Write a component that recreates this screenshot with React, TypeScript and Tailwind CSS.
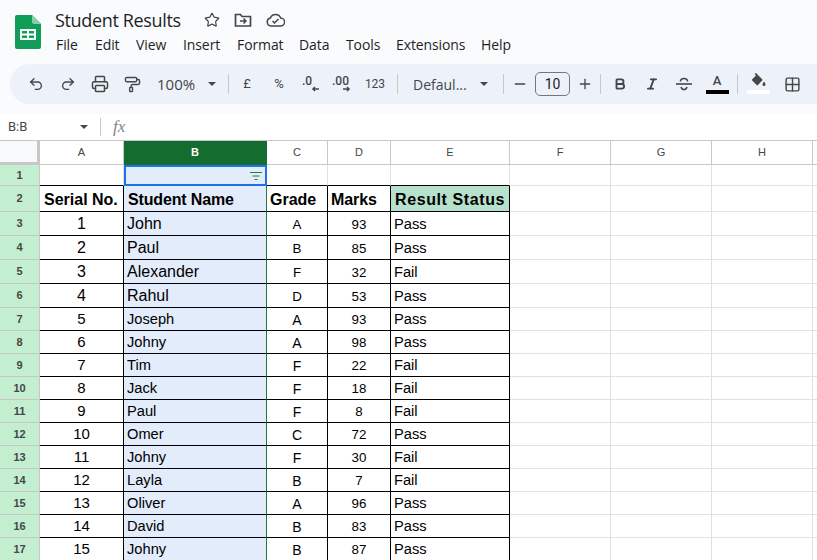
import React from "react";
import { Undo2, Redo2, Printer, PaintRoller, Star, Minus, Plus, Bold, Italic, Grid2x2 } from "lucide-react";

const Caret = ({ className = "" }: { className?: string }) => (
  <svg width="8" height="4" viewBox="0 0 8 4" className={className}><path d="M0 0h8L4 4z" fill="#444746" /></svg>
);
const Sep = () => <div className="h-5 w-px bg-[#c7c7c7] shrink-0" />;
const Btn = ({ children, className = "w-8" }: { children: React.ReactNode; className?: string }) => (
  <div className={`h-6 flex items-center justify-center shrink-0 text-[#444746] ${className}`}>{children}</div>
);

const rows: [string, string, string, string, string, string][] = [
  ["3", "1", "John", "A", "93", "Pass"],
  ["4", "2", "Paul", "B", "85", "Pass"],
  ["5", "3", "Alexander", "F", "32", "Fail"],
  ["6", "4", "Rahul", "D", "53", "Pass"],
  ["7", "5", "Joseph", "A", "93", "Pass"],
  ["8", "6", "Johny", "A", "98", "Pass"],
  ["9", "7", "Tim", "F", "22", "Fail"],
  ["10", "8", "Jack", "F", "18", "Fail"],
  ["11", "9", "Paul", "F", "8", "Fail"],
  ["12", "10", "Omer", "C", "72", "Pass"],
  ["13", "11", "Johny", "F", "30", "Fail"],
  ["14", "12", "Layla", "B", "7", "Fail"],
  ["15", "13", "Oliver", "A", "96", "Pass"],
  ["16", "14", "David", "B", "83", "Pass"],
  ["17", "15", "Johny", "B", "87", "Pass"],
];

const Cell = ({ className = "", children }: { className?: string; children?: React.ReactNode }) => (
  <div className={`flex items-center overflow-hidden whitespace-nowrap border-r border-b text-black ${className}`}>{children}</div>
);
const ColHead = ({ children, active }: { children?: React.ReactNode; active?: boolean }) => (
  <div className={`flex items-center justify-center border-r border-b text-[11px] ${active ? "bg-[#146c2e] border-[#146c2e] text-white font-bold" : "bg-white border-[#c7c7c7] text-[#444746]"}`}>{children}</div>
);
const RowHead = ({ children }: { children: React.ReactNode }) => (
  <div className="flex items-center justify-center bg-[#c4eed0] border-r border-b border-[#c7c7c7] text-[11px] font-bold text-[#444746]">{children}</div>
);

export default function App() {
  return (
    <div className="w-[817px] h-[560px] overflow-hidden bg-white font-['Roboto',sans-serif]">
      <div className="h-[113px] bg-[#f9fbfd] flex flex-col">
        <div className="h-16 flex shrink-0">
          <svg width="26" height="34" viewBox="0 0 26 34" className="ml-[15px] mt-[15px] shrink-0">
            <path d="M2 0h15l9 9v23a2 2 0 0 1-2 2H2a2 2 0 0 1-2-2V2a2 2 0 0 1 2-2z" fill="#0f9d58" />
            <path d="M17 0l9 9h-7a2 2 0 0 1-2-2z" fill="#87ceac" />
            <path d="M5 14h16v11H5zm2 2v2.500h5V16zm7 0v2.500h5V16zM7 20.500V23h5v-2.500zm7 0V23h5v-2.500z" fill="#fff" fillRule="evenodd" />
          </svg>
          <div className="ml-[14px] flex flex-col">
            <div className="flex items-center h-[24px] mt-[8px]">
              <span className="text-[18px] leading-6 text-[#1f1f1f] font-['Open_Sans',sans-serif] tracking-[-0.35px] w-[149px]">Student Results</span>
              <Star size={16} strokeWidth={1.800} className="text-[#444746]" />
              <svg width="18" height="16" viewBox="0 0 18 16" className="ml-[14px]" fill="none" stroke="#444746" strokeWidth="1.700"><path d="M1.500 2.500h5l1.500 2h8.500v9.500h-15z" /><path d="M6 9h6M9.500 6.500L12 9l-2.500 2.500" strokeWidth="1.500" /></svg>
              <svg width="19" height="14" viewBox="0 0 19 14" className="ml-[14px]" fill="none" stroke="#444746" strokeWidth="1.500"><path d="M5 13a4 4 0 0 1-.6-7.900A5.500 5.500 0 0 1 14.700 5 4 4 0 0 1 14.500 13z" /><path d="M6.500 8l2 2 4-4" /></svg>
            </div>
            <div className="flex items-center text-[14px] leading-5 text-[#1f1f1f] mt-[3px] ml-[1px] font-['Open_Sans',sans-serif] gap-[13px] tracking-[-0.1px]">
              <span className="w-[26px]">File</span><span className="w-[28px]">Edit</span><span className="w-[34px]">View</span><span className="w-[41px]">Insert</span><span className="w-[49px]">Format</span><span className="w-[34px]">Data</span><span className="w-[37px]">Tools</span><span className="w-[72px]">Extensions</span><span>Help</span>
            </div>
          </div>
        </div>
        <div className="h-10 ml-[10px] rounded-l-[20px] bg-[#edf2fa] flex items-center pl-[10px] shrink-0">
          <Btn><Undo2 size={16} strokeWidth={2} /></Btn>
          <Btn><Redo2 size={16} strokeWidth={2} /></Btn>
          <Btn><Printer size={18} strokeWidth={2} /></Btn>
          <Btn><PaintRoller size={17} strokeWidth={2} /></Btn>
          <div className="w-[80px] flex items-center pl-[9px] text-[15px] text-[#444746] shrink-0 font-['Open_Sans',sans-serif]"><span>100%</span><Caret className="ml-[13px]" /></div>
          <Sep />
          <div className="w-[2px]" />
          <div className="flex items-center text-[#444746] text-[13px]">
            <Btn><span>£</span></Btn>
            <Btn><span>%</span></Btn>
            <Btn>
              <svg width="20" height="20" viewBox="0 0 20 20" fill="none" stroke="#444746"><text x="1" y="11" fontSize="12" fontWeight="500" fill="#444746" stroke="none" fontFamily="Roboto, sans-serif">.0</text><path d="M18 15h-6M14 13l-2 2 2 2" strokeWidth="1.500" /></svg>
            </Btn>
            <Btn>
              <svg width="22" height="20" viewBox="0 0 22 20" fill="none" stroke="#444746"><text x="0" y="11" fontSize="12" fontWeight="500" fill="#444746" stroke="none" fontFamily="Roboto, sans-serif">.00</text><path d="M11 15h6M15 13l2 2-2 2" strokeWidth="1.500" /></svg>
            </Btn>
            <Btn><span className="text-[12px]">123</span></Btn>
          </div>
          <div className="w-[6px]" />
          <Sep />
          <div className="w-[105px] flex items-center pl-[15px] text-[14px] text-[#444746] shrink-0 font-['Open_Sans',sans-serif]"><span className="w-[60px]">Defaul...</span><Caret className="ml-[7px]" /></div>
          <Sep />
          <Btn className="w-[32px]"><Minus size={16} strokeWidth={2} /></Btn>
          <div className="w-[35px] h-6 rounded-[5px] border border-[#747775] flex items-center justify-center text-[14px] text-[#1f1f1f] shrink-0 -ml-[1px]">10</div>
          <Btn className="w-[30px]"><Plus size={16} strokeWidth={2} /></Btn>
          <Sep />
          <Btn className="w-[38px]"><Bold size={14} strokeWidth={3.200} /></Btn>
          <Btn className="w-[26px]"><Italic size={14} strokeWidth={3.200} /></Btn>
          <Btn className="w-[38px]">
            <svg width="16" height="16" viewBox="0 0 16 16" fill="none" stroke="#444746" strokeWidth="1.600"><path d="M0 8h16" /><path d="M4.500 5.500C4.500 3.500 6 2.500 8 2.500s3.500 1 3.500 3" /><path d="M5 11c.4 1.500 1.500 2.500 3 2.500s2.600-1 3-2.500" /></svg>
          </Btn>
          <div className="w-[28px] h-7 pb-[4px] box-content flex flex-col items-center justify-end shrink-0 text-[#444746] -mt-[4px]">
            <span className="text-[13px] leading-4 font-medium">A</span>
            <div className="w-[23px] h-1 bg-black mt-[1px]" />
          </div>
          <div className="w-[6px]" />
          <Sep />
          <div className="w-[40px] h-7 pb-[4px] box-content flex flex-col items-center justify-end shrink-0 -mt-[4px]">
            <svg width="16" height="15" viewBox="0 0 16 15"><path d="M6 0l1.200 1.200 5 5a1 1 0 0 1 0 1.400L8 12a1 1 0 0 1-1.400 0L2.200 7.600a1 1 0 0 1 0-1.400L6 2.400 4.500 1z" fill="#444746" /><path d="M14 8.500c1 1.500 1.500 2.200 1.500 3a1.500 1.500 0 0 1-3 0c0-.8.500-1.500 1.500-3z" fill="#444746" /></svg>
            <div className="w-[23px] h-1 bg-white mt-[2px]" />
          </div>
          <Btn className="w-[28px]"><Grid2x2 size={17} strokeWidth={2} /></Btn>
        </div>
      </div>

      <div className="h-[28px] border-b border-[#c7c7c7] flex items-center bg-white">
        <span className="ml-[8px] text-[13px] text-[#444746] w-[72px]">B:B</span>
        <Caret className="ml-[0px]" />
        <div className="ml-[12px] h-[18px] w-px bg-[#c7c7c7]" />
        <span className="ml-[12px] text-[17px] italic text-[#80868b] font-['Liberation_Serif',serif]">fx</span>
      </div>

      <div className="grid grid-cols-[40px_84px_143px_61px_63px_119px_101px_101px_101px_5px] grid-rows-[24px_21px_26px_24px_24px_24px_24px_23px_23px_23px_23px_23px_23px_23px_23px_23px_23px_23px_23px] font-['Liberation_Sans',Arial,sans-serif]">
        <div className="bg-[#f8f9fa] border-r-[3px] border-b-[3px] border-[#c7c7c7]" />
        {["A", "B", "C", "D", "E", "F", "G", "H", ""].map((c) => <ColHead key={c} active={c === "B"}>{c}</ColHead>)}

        <RowHead>1</RowHead>
        <Cell className="border-r-[#e1e1e1] border-b-black" />
        <div className="bg-[#e3ecfb] border-2 border-[#1a73e8] flex items-center justify-end pr-[2px]">
          <svg width="14" height="10" viewBox="0 0 14 10" fill="none" stroke="#188038" strokeWidth="1"><path d="M1 1.500h12M3.500 5h7M5.500 8.500h3" /></svg>
        </div>
        <Cell className="border-r-[#e1e1e1] border-b-black" />
        <Cell className="border-r-[#e1e1e1] border-b-black" />
        <Cell className="border-r-[#e1e1e1] border-b-black" />
        <Cell className="border-[#e1e1e1]" /><Cell className="border-[#e1e1e1]" /><Cell className="border-[#e1e1e1]" /><Cell className="border-[#e1e1e1]" />

        <RowHead>2</RowHead>
        <Cell className="border-black font-bold text-[16px] pl-[4px] pt-[2px]">Serial No.</Cell>
        <Cell className="bg-[#e3ecfb] border-r-[#188038] border-b-black font-bold text-[16px] pl-[4px] pt-[2px] tracking-[-0.15px]">Student Name</Cell>
        <Cell className="border-black font-bold text-[16px] pl-[3px] pt-[2px]">Grade</Cell>
        <Cell className="border-black font-bold text-[16px] pl-[3px] pt-[2px] -tracking-[0.1px]">Marks</Cell>
        <Cell className="bg-[#b7e1cd] border-black font-bold text-[16px] pl-[4px] pt-[2px] tracking-[0.6px]">Result Status</Cell>
        <Cell className="border-[#e1e1e1]" /><Cell className="border-[#e1e1e1]" /><Cell className="border-[#e1e1e1]" /><Cell className="border-[#e1e1e1]" />

        {rows.map((r, i) => (
          <React.Fragment key={r[0]}>
            <RowHead>{r[0]}</RowHead>
            <Cell className={`border-black justify-center ${i < 4 ? "text-[16px]" : "text-[15px]"}`}>{r[1]}</Cell>
            <Cell className={`bg-[#e3ecfb] border-r-[#188038] border-b-black pl-[3px] ${i < 4 ? "text-[16px]" : "text-[14.67px]"}`}>{r[2]}</Cell>
            <Cell className={`border-black justify-center pt-[2px] ${i < 4 ? "text-[13.33px]" : "text-[14px]"}`}>{r[3]}</Cell>
            <Cell className="border-black justify-center pt-[2px] text-[13.33px]">{r[4]}</Cell>
            <Cell className="border-black pl-[3px] text-[14.67px]">{r[5]}</Cell>
            <Cell className="border-[#e1e1e1]" /><Cell className="border-[#e1e1e1]" /><Cell className="border-[#e1e1e1]" /><Cell className="border-[#e1e1e1]" />
          </React.Fragment>
        ))}
      </div>
    </div>
  );
}
